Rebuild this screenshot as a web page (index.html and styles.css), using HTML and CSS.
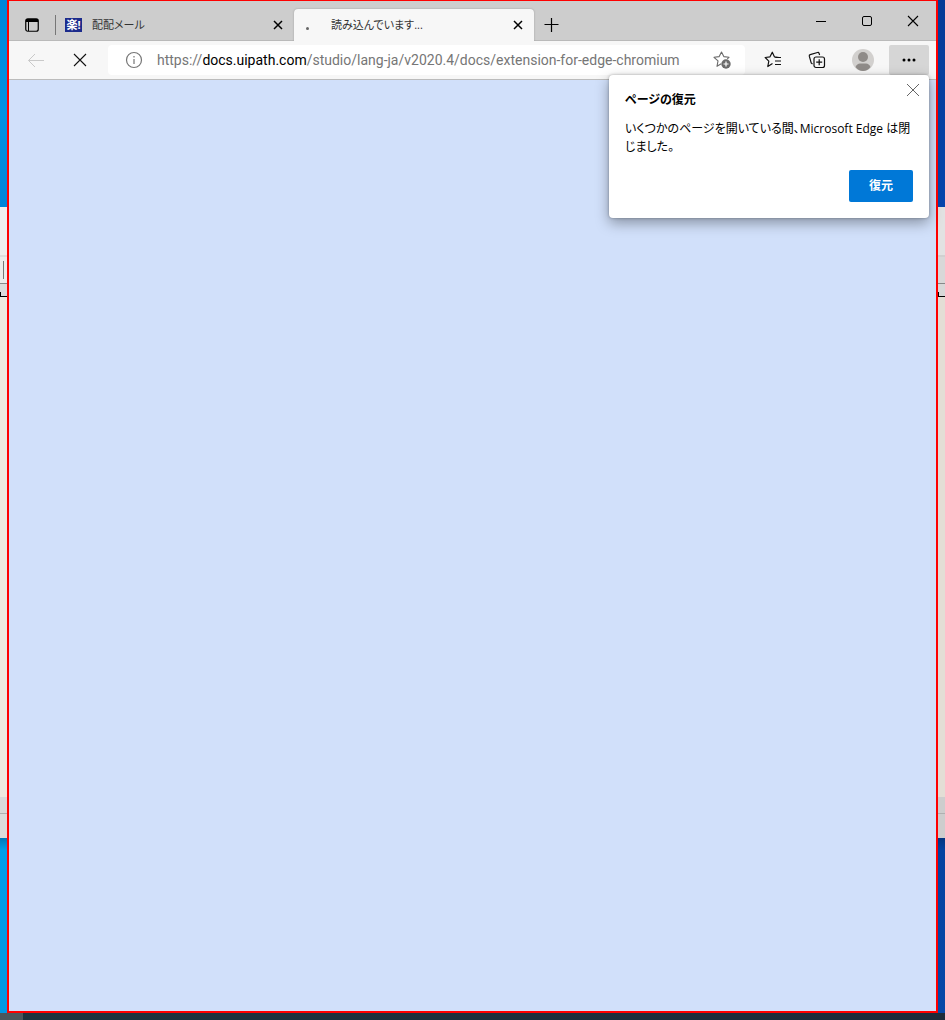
FILE: index.html
```
<!DOCTYPE html>
<html lang="ja">
<head>
<meta charset="utf-8">
<meta name="viewport" content="width=device-width, initial-scale=1">
<title>読み込んでいます...</title>
<link rel="stylesheet" href="styles.css">
</head>
<body>
<div class="desktop">
  <div class="edge edge-left">
    <div class="wallpaper-top"></div><div class="panel-title"></div><div class="panel-tools"><span class="caret"></span></div><div class="panel-ruler"></div><div class="panel-body"></div><div class="panel-status"></div><div class="panel-foot"></div><div class="wallpaper-bottom"></div>
  </div>
  <div class="window">
    <header class="tabstrip">
      <button class="tab-actions" aria-label="タブ操作メニュー">
        <svg width="16" height="16" viewBox="0 0 16 16"><rect x="1.75" y="1.75" width="12.5" height="12.5" rx="2" fill="none" stroke="#000" stroke-width="1.2"/><path d="M2 2h12v3H2z"/><path d="M4.5 5v9" stroke="#000"/></svg>
      </button>
      <div class="tab tab-idle">
        <span class="favicon">楽!</span>
        <span class="tab-title">配配メール</span>
        <button class="tab-close" aria-label="タブを閉じる"><svg width="10" height="10" viewBox="0 0 10 10"><path d="M1 1l8 8M9 1L1 9" stroke="#000" stroke-width="1.5"/></svg></button>
      </div>
      <div class="tab tab-active">
        <span class="spinner"></span>
        <span class="tab-title">読み込んでいます...</span>
        <button class="tab-close" aria-label="タブを閉じる"><svg width="10" height="10" viewBox="0 0 10 10"><path d="M1 1l8 8M9 1L1 9" stroke="#000" stroke-width="1.5"/></svg></button>
      </div>
      <button class="new-tab" aria-label="新しいタブ"><svg width="16" height="16" viewBox="0 0 16 16"><path d="M7.500 1v14M.5 7.500h14" stroke="#000" stroke-width="1.2"/></svg></button>
      <div class="window-controls">
        <button aria-label="最小化"><svg width="12" height="12" viewBox="0 0 12 12"><path d="M1 6.5h10" stroke="#000"/></svg></button>
        <button aria-label="最大化"><svg width="12" height="12" viewBox="0 0 12 12"><rect x="1.5" y="1.5" width="9" height="9" rx="1.5" fill="none" stroke="#000"/></svg></button>
        <button aria-label="閉じる"><svg width="12" height="12" viewBox="0 0 12 12"><path d="M1 1l10 10M11 1L1 11" stroke="#000" stroke-width="1.1"/></svg></button>
      </div>
    </header>
    <nav class="toolbar">
      <button class="tool" aria-label="戻る" disabled><svg width="18" height="16" viewBox="0 0 18 16"><path d="M17 8.5H1.5M8 2L1.5 8.5 8 15" fill="none" stroke="#c9c9c9"/></svg></button>
      <button class="tool" aria-label="中止"><svg width="14" height="14" viewBox="0 0 14 14"><path d="M1 1l12 12M13 1L1 13" stroke="#111" stroke-width="1.1"/></svg></button>
      <div class="address">
        <svg width="18" height="18" viewBox="0 0 18 18"><circle cx="9" cy="9" r="7.5" fill="none" stroke="#767676" stroke-width="1.2"/><path d="M9 8v5M9 5v1.5" stroke="#767676" stroke-width="1.2"/></svg>
        <a class="url" href="#page">https://<span class="host">docs.uipath.com</span>/studio/lang-ja/v2020.4/docs/extension-for-edge-chromium</a>
        <button class="add-favorite" aria-label="お気に入りに追加"><svg width="18" height="18" viewBox="0 0 18 18"><path d="M8.2 12.8L4 15.3l1-5.4-4-3.6 5.2-.7L8.5 1l2.3 4.6 5.2.7-1.7 1.5" fill="none" stroke="#6b6b6b" stroke-width="1.1" stroke-linejoin="round"/><circle cx="13" cy="13" r="4.7" fill="#6b6b6b"/><path d="M13 10.5v5M10.5 13h5" stroke="#fff" stroke-width="1.2"/></svg></button>
      </div>
      <button class="tool" aria-label="お気に入り"><svg width="18" height="18" viewBox="0 0 18 18"><path d="M8.500 12.500L3.8 15.500l1-5.4L1.2 6.500l4.800-.7L8.3 1.200l2.100 4.600 4.600.7M11 6.500h6M11 10h6M11 13.500h6" fill="none" stroke="#111" stroke-width="1.2" stroke-linejoin="round"/></svg></button>
      <button class="tool" aria-label="コレクション"><svg width="18" height="18" viewBox="0 0 18 18"><path d="M4.5 13L3.2 12 1.3 5.2Q1 4 2.2 3.6L9.5 1.5q1.2-.3 1.6.9L11.6 4" fill="none" stroke="#111" stroke-width="1.2"/><rect x="6" y="6" width="10.5" height="10.5" rx="2" fill="#f7f7f7" stroke="#111" stroke-width="1.2"/><path d="M11.2 8.2v6M8.2 11.2h6" stroke="#111" stroke-width="1.2"/></svg></button>
      <button class="tool profile" aria-label="プロファイル"><svg width="22" height="22" viewBox="0 0 22 22"><circle cx="11" cy="11" r="11" fill="#d2d0ce"/><circle cx="11" cy="8" r="5" fill="#8f8b88"/><path d="M3.5 18Q5 14.500 8 14.500h6q3 0 4.500 3.500Q15.500 22 11 22t-7.500-4z" fill="#8f8b88"/></svg></button>
      <button class="tool menu" aria-label="設定など"><svg width="16" height="4" viewBox="0 0 16 4"><circle cx="3" cy="2" r="1.500"/><circle cx="8" cy="2" r="1.500"/><circle cx="13" cy="2" r="1.500"/></svg></button>
    </nav>
    <main class="page" id="page"></main>
    <section class="restore" role="dialog" aria-labelledby="restore-title">
      <button class="dismiss" aria-label="閉じる"><svg width="14" height="14" viewBox="0 0 14 14"><path d="M1 1l12 12M13 1L1 13" stroke="#666"/></svg></button>
      <h1 class="restore-title" id="restore-title">ページの復元</h1>
      <p class="restore-text">いくつかのページを開いている間、Microsoft Edge は閉じました。</p>
      <button class="restore-button">復元</button>
    </section>
  </div>
  <div class="edge edge-right">
    <div class="wallpaper-top"></div><div class="panel-title"></div><div class="panel-tools"></div><div class="panel-ruler"></div><div class="panel-body"></div><div class="panel-status"></div><div class="panel-foot"></div><div class="wallpaper-bottom"></div>
  </div>
  <footer class="taskbar"></footer>
</div>
</body>
</html>
```
FILE: styles.css
```
* { box-sizing: border-box; }
body {
  margin: 0;
  font: 12px/18px "Open Sans", "Noto Sans CJK JP", sans-serif;
  font-feature-settings: "palt";
  color: #000;
}
button { border: 0; padding: 0; background: transparent; font: inherit; display: flex; align-items: center; justify-content: center; }
svg { display: block; flex: none; }

.desktop { min-height: 100vh; display: grid; grid-template-columns: 7px 1fr 7px; grid-template-rows: 1fr 7px; }

/* Background application and wallpaper on both sides of the window */
.edge { display: flex; flex-direction: column; }
.wallpaper-top { height: 207px; background: linear-gradient(#0086da, #0092e2 55%, #0085d8); }
.panel-title { height: 50px; background: #efefef; border-bottom: 2px solid #dedede; }
.panel-tools { height: 27px; background: #ececec; border-bottom: 1px solid #888; display: flex; padding: 4px 3px; }
.caret { width: 1px; height: 18px; background: #777; }
.panel-ruler { height: 13px; background: linear-gradient(#000, #000) left bottom / 1px 4px no-repeat #dcdcdc; border-bottom: 1px solid #000; }
.panel-body { flex: 1; background: #eeeadf; }
.panel-status { height: 17px; background: #dadada; border-bottom: 1px solid #b0b0b0; }
.panel-foot { height: 24px; background: #dcdcdc; }
.wallpaper-bottom { height: 175px; background: linear-gradient(#0078b8, #009de8 12px, #0098e2); }
.edge-right .wallpaper-top { background: linear-gradient(#063a96, #0645ad); }
.edge-right .panel-title { background: #e2e2e2; border-color: #d0d0d0; }
.edge-right .panel-tools, .edge-right .panel-ruler { background-color: #d8d8d8; }
.edge-right .panel-body { background: #e3ded5; }
.edge-right .panel-status, .edge-right .panel-foot { background: #cdcdcd; }
.edge-right .wallpaper-bottom { background: linear-gradient(#04357f, #0442a0 12px, #0648a8); }
.taskbar { grid-column: 1 / -1; background: linear-gradient(90deg, #4b575b 23px, #1d343e 23px, #1d2b3a); }

/* Browser window */
.window { position: relative; min-width: 0; display: flex; flex-direction: column; border: 2px solid #f00; border-top-width: 1px; background: #d1e0fa; }
.tabstrip { height: 40px; display: flex; background: #cdcdcd; border-bottom: 1px solid #bababa; }
.tab-actions { width: 46px; margin-top: 8px; }
.tab { display: flex; align-items: center; height: 32px; margin-top: 8px; min-width: 0; }
.tab-idle { flex: 0 1 239px; padding-left: 10px; position: relative; }
.tab-idle::before { content: ""; position: absolute; left: 0; top: 6px; width: 1px; height: 20px; background: #777; }
.favicon { display: flex; justify-content: center; width: 17px; height: 14px; margin-right: 10px; background: #1c2b8c; color: #fff; font-size: 11px; line-height: 14px; font-weight: 700; white-space: nowrap; }
.tab-title { flex: 1; min-width: 0; overflow: hidden; white-space: nowrap; font-size: 11px; color: #333; }
.tab-close { width: 24px; height: 24px; margin-right: 4px; }
.tab-active { flex: 0 1 240px; background: #f7f7f7; border-radius: 4px 4px 0 0; box-shadow: 0 0 2px #999; clip-path: inset(-3px -3px 0); }
.spinner { width: 3px; height: 3px; margin: 6px 22px 0 12px; border-radius: 50%; background: #666; }
.new-tab { width: 35px; height: 32px; margin-top: 8px; }
.window-controls { display: flex; margin-left: auto; }
.window-controls button { width: 46px; }

.toolbar { height: 39px; display: flex; align-items: flex-start; gap: 4px; padding: 4px 7px 0; background: #f7f7f7; border-bottom: 1px solid #bcbcbc; }
.tool { flex: none; width: 40px; height: 30px; }
.profile { width: 44px; }
.menu { background: #d6d6d6; border-radius: 2px; }
.address { flex: 1; min-width: 0; height: 30px; display: flex; align-items: center; margin: 0 4px; padding: 0 14px 0 17px; background: #fff; border-radius: 4px; }
.url { flex: 1; min-width: 0; margin-left: 14px; overflow: hidden; white-space: nowrap; font-family: Roboto, "Noto Sans CJK JP", sans-serif; font-size: 14px; color: #767676; text-decoration: none; }
.host { color: #000; }
.page { flex: 1; background: #d1e0fa; }

/* Restore popup anchored to the menu button */
.restore { position: absolute; top: 74px; right: 7px; width: 320px; padding: 16px; display: flex; flex-direction: column; background: #fff; border-radius: 4px; box-shadow: 0 5px 14px rgba(0, 0, 0, .35), 0 0 3px rgba(0, 0, 0, .3); }
.restore-title { margin: 0 0 11px; font-size: 12px; line-height: 18px; font-weight: 700; }
.restore-text { margin: 0 0 14px; }
.restore-button { align-self: flex-end; width: 64px; height: 32px; background: #0078d7; border-radius: 2px; color: #fff; font-weight: 700; }
.dismiss { position: absolute; top: 3px; right: 4px; width: 24px; height: 24px; }
```
